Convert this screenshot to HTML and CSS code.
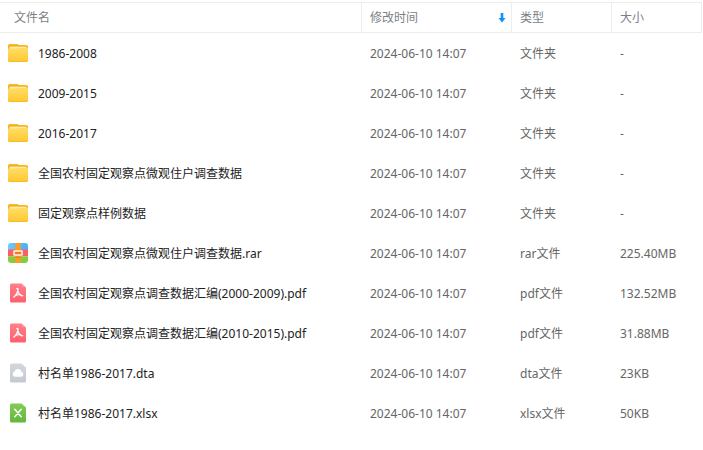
FILE: index.html
```
<!DOCTYPE html>
<html lang="zh-CN">
<head>
<meta charset="utf-8">
<meta name="viewport" content="width=device-width, initial-scale=1">
<title>文件列表</title>
<link rel="stylesheet" href="styles.css">
</head>
<body>
<svg class="defs" aria-hidden="true">
  <defs>
    <linearGradient id="g-folder" x1="0" y1="0" x2="0" y2="1"><stop offset="0" stop-color="#ffdc66"/><stop offset="1" stop-color="#ffc935"/></linearGradient>
    <linearGradient id="g-pdf" x1="0" y1="0" x2="0" y2="1"><stop offset="0" stop-color="#ff8089"/><stop offset="1" stop-color="#ff5f6d"/></linearGradient>
    <linearGradient id="g-dta" x1="0" y1="0" x2="0" y2="1"><stop offset="0" stop-color="#d3d7dd"/><stop offset="1" stop-color="#c3c9d1"/></linearGradient>
    <linearGradient id="g-xls" x1="0" y1="0" x2="0" y2="1"><stop offset="0" stop-color="#83cb57"/><stop offset="1" stop-color="#62b73b"/></linearGradient>
    <linearGradient id="g-blue" x1="0" y1="0" x2="1" y2="0"><stop offset="0" stop-color="#6fc9fb"/><stop offset="1" stop-color="#47aef8"/></linearGradient>
    <clipPath id="c-rar"><rect width="20" height="20" rx="3"/></clipPath>
    <symbol id="folder" viewBox="0 0 20 20">
      <path fill="#fbb51c" d="M0 2.6Q0 1 1.6 1H9Q9.8 1 10.4 1.6L11 2H18.4Q20 2 20 3.6V17.4Q20 19 18.4 19H1.6Q0 19 0 17.4Z"/>
      <path fill="#ffefbe" d="M1.4 5Q1.4 3.8 2.6 3.8H17.4Q18.6 3.8 18.6 5V8H1.4Z"/>
      <path fill="url(#g-folder)" d="M0 6.4Q0 5.6 1.2 5.6H8.8L10.2 4.8H18.6Q20 4.8 20 6.2V16.8Q20 18.2 18.6 18.2H1.4Q0 18.2 0 16.8Z"/>
    </symbol>
    <symbol id="rar" viewBox="0 0 20 20">
      <g clip-path="url(#c-rar)">
        <path fill="url(#g-blue)" d="M0 0H20V7H0Z"/>
        <path fill="#fb6161" d="M0 6.6H20V13.4H0Z"/>
        <path fill="#84cd3c" d="M0 13.4H20V20H0Z"/>
        <path fill="#fb9c25" d="M7.3 0H12.7V20H7.3Z"/>
        <path fill="#f5831d" d="M7.3 13.4H12.7V15H7.3Z"/>
      </g>
      <rect x="6" y="8" width="8" height="4" rx=".3" fill="#f07a2a" stroke="#fff4df" stroke-width="1.6"/>
    </symbol>
    <symbol id="pdf" viewBox="0 0 20 20">
      <path fill="url(#g-pdf)" d="M2 2Q2 .4 3.6 .4H13.5L18 4.6V18Q18 19.6 16.4 19.6H3.6Q2 19.6 2 18Z"/>
      <path fill="#ffb0b5" d="M13.5 .4L18 4.6H14.8Q13.5 4.6 13.5 3.3Z" opacity=".35"/>
      <path fill="none" stroke="#fff" stroke-width="1.3" stroke-linecap="round" stroke-linejoin="round" d="M8.8 5.6Q10.3 5.1 10 7.2Q9.6 9.7 7.7 12.2Q6.6 13.6 5.8 14.1M9.8 8.2Q10.8 11 13 12.4Q14.2 13.1 14.7 12.6M7.2 12.5Q10 11.3 12.8 11.9"/>
    </symbol>
    <symbol id="dta" viewBox="0 0 20 20">
      <path fill="url(#g-dta)" d="M2 2Q2 .4 3.6 .4H13.5L18 4.6V18Q18 19.6 16.4 19.6H3.6Q2 19.6 2 18Z"/>
      <path fill="#fff" d="M7 13.8A2.6 2.6 0 0 1 6.5 8.7A3.6 3.6 0 0 1 13.5 8.7A2.6 2.6 0 0 1 13 13.8Z"/>
    </symbol>
    <symbol id="xls" viewBox="0 0 20 20">
      <path fill="url(#g-xls)" d="M2 2Q2 .4 3.6 .4H13.5L18 4.6V18Q18 19.6 16.4 19.6H3.6Q2 19.6 2 18Z"/>
      <path fill="none" stroke="#fff" stroke-width="1.5" stroke-linecap="round" d="M6.8 6.2L13.2 13.8M13.2 6.2L6.8 13.8"/>
    </symbol>
  </defs>
</svg>
<table class="files">
  <colgroup><col><col class="col-time"><col class="col-type"><col class="col-size"></colgroup>
  <thead>
    <tr>
      <th class="head-name" scope="col">文件名</th>
      <th scope="col" aria-sort="descending"><button class="sort" type="button">修改时间<svg class="arrow" viewBox="0 0 8 10" aria-hidden="true"><path fill="#0b93ff" d="M2.7 0H5.3V5H7.5L4 9.5L.5 5H2.7Z"/></svg></button></th>
      <th scope="col">类型</th>
      <th scope="col">大小</th>
    </tr>
  </thead>
  <tbody>
    <tr><td><a class="file" href="#"><svg class="icon" aria-hidden="true"><use href="#folder"/></svg>1986-2008</a></td><td>2024-06-10 14:07</td><td>文件夹</td><td>-</td></tr>
    <tr><td><a class="file" href="#"><svg class="icon" aria-hidden="true"><use href="#folder"/></svg>2009-2015</a></td><td>2024-06-10 14:07</td><td>文件夹</td><td>-</td></tr>
    <tr><td><a class="file" href="#"><svg class="icon" aria-hidden="true"><use href="#folder"/></svg>2016-2017</a></td><td>2024-06-10 14:07</td><td>文件夹</td><td>-</td></tr>
    <tr><td><a class="file" href="#"><svg class="icon" aria-hidden="true"><use href="#folder"/></svg>全国农村固定观察点微观住户调查数据</a></td><td>2024-06-10 14:07</td><td>文件夹</td><td>-</td></tr>
    <tr><td><a class="file" href="#"><svg class="icon" aria-hidden="true"><use href="#folder"/></svg>固定观察点样例数据</a></td><td>2024-06-10 14:07</td><td>文件夹</td><td>-</td></tr>
    <tr><td><a class="file" href="#"><svg class="icon" aria-hidden="true"><use href="#rar"/></svg>全国农村固定观察点微观住户调查数据.rar</a></td><td>2024-06-10 14:07</td><td>rar文件</td><td>225.40MB</td></tr>
    <tr><td><a class="file" href="#"><svg class="icon" aria-hidden="true"><use href="#pdf"/></svg>全国农村固定观察点调查数据汇编(2000-2009).pdf</a></td><td>2024-06-10 14:07</td><td>pdf文件</td><td>132.52MB</td></tr>
    <tr><td><a class="file" href="#"><svg class="icon" aria-hidden="true"><use href="#pdf"/></svg>全国农村固定观察点调查数据汇编(2010-2015).pdf</a></td><td>2024-06-10 14:07</td><td>pdf文件</td><td>31.88MB</td></tr>
    <tr><td><a class="file" href="#"><svg class="icon" aria-hidden="true"><use href="#dta"/></svg>村名单1986-2017.dta</a></td><td>2024-06-10 14:07</td><td>dta文件</td><td>23KB</td></tr>
    <tr><td><a class="file" href="#"><svg class="icon" aria-hidden="true"><use href="#xls"/></svg>村名单1986-2017.xlsx</a></td><td>2024-06-10 14:07</td><td>xlsx文件</td><td>50KB</td></tr>
  </tbody>
</table>
</body>
</html>
```
FILE: styles.css
```
* {
  box-sizing: border-box;
}

body {
  margin: 0;
  padding: 2px 1px 0 0;
  background: #fff;
  color: #666;
  font: 12px/20px "Noto Sans", "Noto Sans CJK SC", sans-serif;
}

.defs {
  position: absolute;
  width: 0;
  height: 0;
}

.files {
  width: 100%;
  table-layout: fixed;
  border-collapse: separate;
  border-spacing: 0;
}

.col-time {
  width: 150px;
}

.col-type {
  width: 100px;
}

.col-size {
  width: 90px;
}

th {
  height: 31px;
  padding: 0 8px;
  border: solid #ededed;
  border-width: 1px 1px 1px 0;
  color: #7c7f86;
  font-weight: 400;
  text-align: left;
}

.head-name {
  padding-left: 14px;
}

.sort {
  display: flex;
  align-items: center;
  justify-content: space-between;
  width: 100%;
  padding: 0;
  border: 0;
  background: none;
  color: inherit;
  font: inherit;
  cursor: pointer;
}

.arrow {
  width: 8px;
  height: 10px;
  margin-right: -3px;
}

td {
  height: 40px;
  padding: 2px 8px 0;
  white-space: nowrap;
}

.file {
  display: flex;
  align-items: center;
  gap: 10px;
  height: 20px;
  color: #222;
  text-decoration: none;
}

.icon {
  flex: none;
  width: 20px;
  height: 20px;
  margin-bottom: 2px;
}
```
